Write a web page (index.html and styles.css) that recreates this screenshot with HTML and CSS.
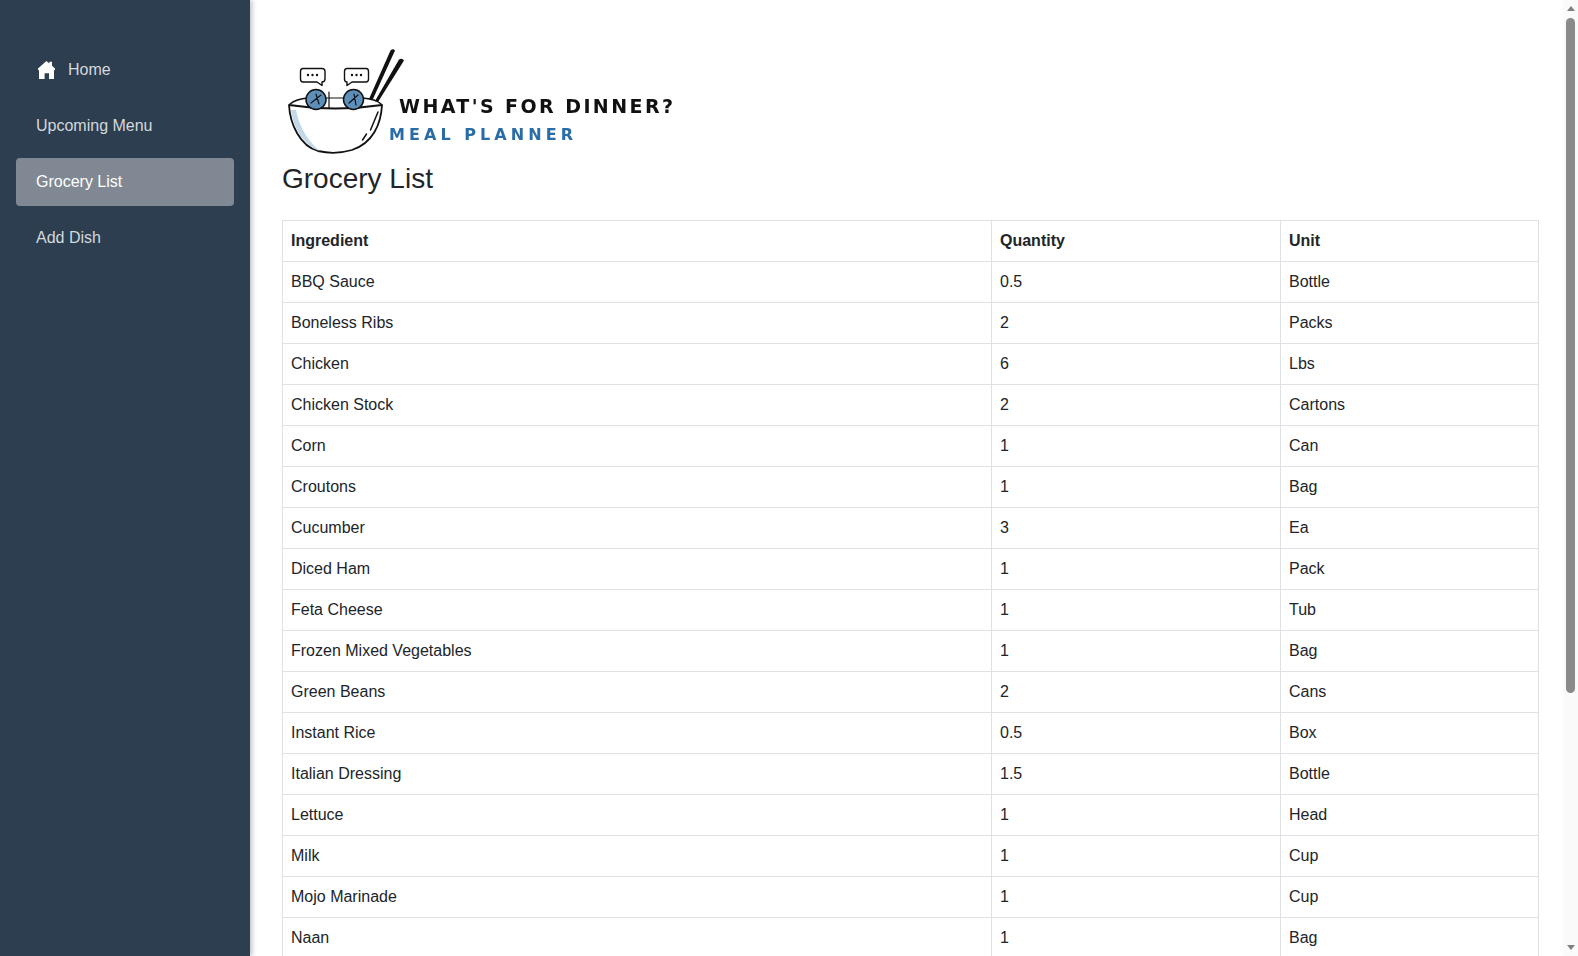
FILE: index.html
```html
<!DOCTYPE html>
<html lang="en">
<head>
<meta charset="utf-8">
<title>Grocery List</title>
<link rel="stylesheet" href="styles.css">
</head>
<body>
<div class="app">
  <nav class="sidebar">
    <a class="nav-link" href="#">
      <svg class="home-icon" viewBox="0 0 17 18" aria-hidden="true"><path d="M8.4 0 L11.4 2.6 V0.8 H14 V4.8 L17 7.6 V9.2 L16 9 V18 H11 V12.3 H6.6 V18 H1 V9 L0 9.2 V7.6 Z"/></svg>
      <span>Home</span>
    </a>
    <a class="nav-link" href="#">Upcoming Menu</a>
    <a class="nav-link active" href="#">Grocery List</a>
    <a class="nav-link" href="#">Add Dish</a>
  </nav>
  <main class="content">
    <svg class="logo" viewBox="282 42 400 120" role="img" aria-label="What's for dinner? Meal planner">
      <!-- chopsticks -->
      <path class="ink" d="M369 99 L390.5 50.5 Q393 48 395 50.5 L372.5 100 Z"/>
      <path class="ink" d="M375 101 L399 59.5 Q402 57.5 404 60.5 L378 102 Z"/>
      <!-- back rim -->
      <path class="line" d="M290 104 Q296 99 308 98"/>
      <path class="line" d="M362 98 Q376 99 381 104"/>
      <path class="line thin" d="M329 92 V109"/>
      <path class="line thin" d="M326 98 H345"/>
      <!-- bowl -->
      <path class="bowl" d="M289 105 Q335 112 382 105 C381 124 373 143 352 150 Q335 155 318 151 C300 146 290 124 289 105 Z"/>
      <path class="shade" d="M291 110 C293 126 302 145 320 151 C310 143 300 130 296 110 Z"/>
      <path class="line" d="M378 112 L370.5 130"/>
      <path class="line" d="M366.5 134 L362.5 140"/>
      <!-- balls -->
      <circle class="ball" cx="316" cy="99.5" r="10"/>
      <circle class="ball" cx="353.5" cy="99.5" r="10"/>
      <path class="line thin" d="M311 103 L321 95 M316 94 L319 104 M349 103 L358 95 M354 94 L356 105"/>
      <!-- speech bubbles -->
      <path class="bubble" d="M303 68.5 H322 Q325 68.5 325 71.5 V79 Q325 82 322 82 V85.5 L317 82 H303 Q300.5 82 300.5 79 V71.5 Q300.5 68.5 303 68.5 Z"/>
      <path class="bubble" d="M347 68.5 H366 Q368.5 68.5 368.5 71.5 V79 Q368.5 82 366 82 H352 L347 85.5 V82 Q344.5 82 344.5 79 V71.5 Q344.5 68.5 347 68.5 Z"/>
      <circle class="ink" cx="308" cy="75" r="1.2"/><circle class="ink" cx="312.5" cy="75" r="1.2"/><circle class="ink" cx="317" cy="75" r="1.2"/>
      <circle class="ink" cx="352" cy="75" r="1.2"/><circle class="ink" cx="356.5" cy="75" r="1.2"/><circle class="ink" cx="361" cy="75" r="1.2"/>
      <!-- wordmark -->
      <text class="logo-title" x="399" y="113" textLength="274" lengthAdjust="spacing">WHAT'S FOR DINNER?</text>
      <text class="logo-sub" x="389" y="140" textLength="184" lengthAdjust="spacing">MEAL PLANNER</text>
    </svg>
    <h3 class="page-title">Grocery List</h3>
    <table class="grocery">
      <colgroup>
        <col class="col-name">
        <col class="col-qty">
        <col class="col-unit">
      </colgroup>
      <thead>
        <tr><th>Ingredient</th><th>Quantity</th><th>Unit</th></tr>
      </thead>
      <tbody>
        <tr><td>BBQ Sauce</td><td>0.5</td><td>Bottle</td></tr>
        <tr><td>Boneless Ribs</td><td>2</td><td>Packs</td></tr>
        <tr><td>Chicken</td><td>6</td><td>Lbs</td></tr>
        <tr><td>Chicken Stock</td><td>2</td><td>Cartons</td></tr>
        <tr><td>Corn</td><td>1</td><td>Can</td></tr>
        <tr><td>Croutons</td><td>1</td><td>Bag</td></tr>
        <tr><td>Cucumber</td><td>3</td><td>Ea</td></tr>
        <tr><td>Diced Ham</td><td>1</td><td>Pack</td></tr>
        <tr><td>Feta Cheese</td><td>1</td><td>Tub</td></tr>
        <tr><td>Frozen Mixed Vegetables</td><td>1</td><td>Bag</td></tr>
        <tr><td>Green Beans</td><td>2</td><td>Cans</td></tr>
        <tr><td>Instant Rice</td><td>0.5</td><td>Box</td></tr>
        <tr><td>Italian Dressing</td><td>1.5</td><td>Bottle</td></tr>
        <tr><td>Lettuce</td><td>1</td><td>Head</td></tr>
        <tr><td>Milk</td><td>1</td><td>Cup</td></tr>
        <tr><td>Mojo Marinade</td><td>1</td><td>Cup</td></tr>
        <tr><td>Naan</td><td>1</td><td>Bag</td></tr>
      </tbody>
    </table>
  </main>
  <div class="scrollbar" aria-hidden="true">
    <span class="arrow arrow-up"></span>
    <span class="track"><span class="thumb"></span></span>
    <span class="arrow arrow-down"></span>
  </div>
</div>
</body>
</html>
```
FILE: styles.css
```css
* { box-sizing: border-box; }

body {
  margin: 0;
  background: #fff;
  color: #212529;
  font-family: "Liberation Sans", Arial, sans-serif;
  font-size: 16px;
  line-height: 1.5;
}

.app {
  display: flex;
  align-items: flex-start;
}

.sidebar {
  position: sticky;
  top: 0;
  flex: 0 0 250px;
  height: 100vh;
  padding: 46px 16px 0;
  display: flex;
  flex-direction: column;
  gap: 8px;
  background: #2c3e50;
  box-shadow: 2px 0 5px rgba(0, 0, 0, 0.25);
}

.nav-link {
  display: flex;
  align-items: center;
  gap: 13px;
  height: 48px;
  padding: 0 20px;
  border-radius: 4px;
  color: #d5d8dc;
  text-decoration: none;
}

.nav-link.active {
  background: #7f8893;
  color: #fff;
}

.home-icon {
  width: 17px;
  height: 18px;
  margin-left: 2px;
  fill: #fff;
  flex: none;
}

.content {
  flex: 1;
  min-width: 0;
  padding: 42px 39px 0 32px;
}

.logo {
  display: block;
  width: 400px;
  height: 120px;
  filter: blur(0.35px);
}

.ink { fill: #111; }
.line { fill: none; stroke: #111; stroke-width: 1.5; stroke-linecap: round; }
.line.thin { stroke-width: 1.2; }
.bowl { fill: #fff; stroke: #111; stroke-width: 1.8; stroke-linejoin: round; }
.shade { fill: #c3d8e8; }
.ball { fill: #5c8fba; stroke: #111; stroke-width: 1.5; }
.bubble { fill: #fff; stroke: #111; stroke-width: 1.4; stroke-linejoin: round; }

.logo-title {
  font-family: "DejaVu Sans", "Liberation Sans", sans-serif;
  font-size: 19px;
  font-weight: 700;
  fill: #111;
}

.logo-sub {
  font-family: "DejaVu Sans", "Liberation Sans", sans-serif;
  font-size: 16px;
  font-weight: 700;
  fill: #2a6ca5;
}

.page-title {
  margin: 0 0 24px;
  font-size: 28px;
  font-weight: 500;
  line-height: 1.2;
}

.grocery {
  width: 100%;
  table-layout: fixed;
  border-collapse: collapse;
}

.col-name { width: 709px; }
.col-qty { width: 289px; }

.grocery th,
.grocery td {
  padding: 8px;
  border: 1px solid #dee2e6;
  text-align: left;
  vertical-align: top;
}

.grocery th { font-weight: 700; }

/* drawn window scrollbar, sits over the page edge */
.scrollbar {
  position: fixed;
  top: 0;
  right: 0;
  bottom: 0;
  width: 15px;
  display: flex;
  flex-direction: column;
  align-items: center;
  background: #fafafa;
}

.arrow {
  flex: 0 0 5px;
  width: 0;
  border-left: 4.5px solid transparent;
  border-right: 4.5px solid transparent;
}

.arrow-up {
  margin-top: 6px;
  border-bottom: 5px solid #808080;
}

.arrow-down {
  margin-bottom: 6px;
  border-top: 5px solid #808080;
}

.track {
  flex: 1;
  width: 100%;
  padding: 7px 3px 0;
}

.thumb {
  display: block;
  height: 675px;
  border-radius: 5px;
  background: #8a8a8a;
}
```
